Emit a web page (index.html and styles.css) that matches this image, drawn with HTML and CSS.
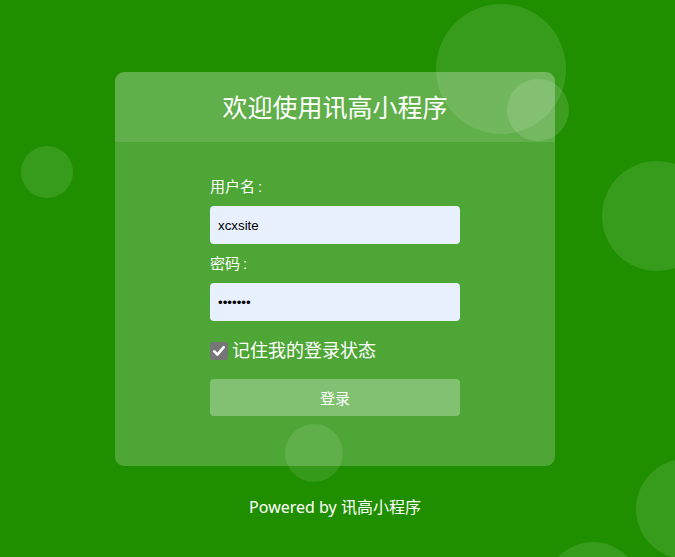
FILE: index.html
```html
<!DOCTYPE html>
<html lang="zh-CN">
<head>
<meta charset="utf-8">
<title>欢迎使用讯高小程序</title>
<link rel="stylesheet" href="styles.css">
</head>
<body>
<div class="page">
  <span class="bubble b1"></span>
  <span class="bubble b2"></span>
  <span class="bubble b3"></span>
  <span class="bubble b4"></span>
  <span class="bubble b5"></span>
  <span class="bubble b6"></span>
  <span class="bubble b7"></span>
  <div class="card">
    <div class="card-head">欢迎使用讯高小程序</div>
    <form class="card-body">
      <label class="field-label">用户名<span class="colon">:</span></label>
      <input class="field" type="text" value="xcxsite">
      <label class="field-label">密码<span class="colon">:</span></label>
      <input class="field" type="password" value="1234567">
      <div class="remember">
        <span class="check"><svg width="14" height="14" viewBox="0 0 14 14"><path d="M2.2 7.4 L5.4 10.6 L11.8 3.2" fill="none" stroke="#fff" stroke-width="2.6" stroke-linecap="round" stroke-linejoin="round"/></svg></span>
        <span class="remember-text">记住我的登录状态</span>
      </div>
      <button class="submit" type="button">登录</button>
    </form>
  </div>
  <div class="footer">Powered by 讯高小程序</div>
</div>
</body>
</html>
```
FILE: styles.css
```css
* { box-sizing: border-box; }
html, body { margin: 0; padding: 0; }
body {
  background: #1f8f00;
  font-family: "Liberation Sans", "Noto Sans CJK SC", sans-serif;
  color: #fff;
  overflow: hidden;
}
.page {
  position: relative;
  width: 675px;
  height: 557px;
  padding-top: 72px;
  padding-right: 5px;
  display: flex;
  flex-direction: column;
  align-items: center;
  overflow: hidden;
}
.bubble {
  position: absolute;
  border-radius: 50%;
  background: rgba(255, 255, 255, 0.11);
  z-index: 2;
  pointer-events: none;
}
.b1 { left: 436px; top: 4px; width: 130px; height: 130px; }
.b2 { left: 507px; top: 79px; width: 62px; height: 62px; background: rgba(255,255,255,0.13); }
.b3 { left: 602px; top: 161px; width: 110px; height: 110px; }
.b4 { left: 21px; top: 146px; width: 52px; height: 52px; }
.b5 { left: 636px; top: 459px; width: 100px; height: 100px; }
.b6 { left: 545px; top: 542px; width: 96px; height: 96px; }
.b7 { left: 285px; top: 424px; width: 58px; height: 58px; background: rgba(255,255,255,0.1); }
.card {
  position: relative;
  z-index: 1;
  width: 440px;
  border-radius: 9px;
  overflow: hidden;
  background: rgba(255, 255, 255, 0.21);
}
.card-head {
  height: 70px;
  display: flex;
  align-items: center;
  justify-content: center;
  font-size: 25px;
  padding-bottom: 2px;
  background: rgba(255, 255, 255, 0.1);
}
.card-body {
  margin: 0;
  width: 250px;
  margin-left: auto;
  margin-right: auto;
  padding: 35px 0 50px;
  display: flex;
  flex-direction: column;
}
.field-label {
  font-size: 15px;
  line-height: 20px;
  height: 20px;
}
.colon {
  margin-left: 3px;
}
.field {
  margin: 9px 0 10px;
  height: 38px;
  width: 250px;
  border: none;
  border-radius: 4px;
  background: #e8f0fe;
  padding: 0 8px;
  font-family: "Liberation Sans", sans-serif;
  font-size: 13.33px;
  color: #000;
  outline: none;
}
.remember {
  display: flex;
  align-items: center;
  gap: 4px;
  height: 20px;
  margin-top: 10px;
}
.check {
  width: 18px;
  height: 18px;
  border-radius: 3px;
  background: #767676;
  display: flex;
  align-items: center;
  justify-content: center;
}
.remember-text {
  font-size: 18px;
  line-height: 20px;
}
.submit {
  margin-top: 18px;
  height: 37px;
  border: none;
  border-radius: 4px;
  background: rgba(255, 255, 255, 0.3);
  color: #fff;
  font-family: "Liberation Sans", "Noto Sans CJK SC", sans-serif;
  font-size: 15px;
}
.footer {
  margin-top: 31px;
  font-family: "Noto Sans", "Noto Sans CJK SC", sans-serif;
  font-size: 16px;
  line-height: 20px;
  position: relative;
  z-index: 1;
}
```
